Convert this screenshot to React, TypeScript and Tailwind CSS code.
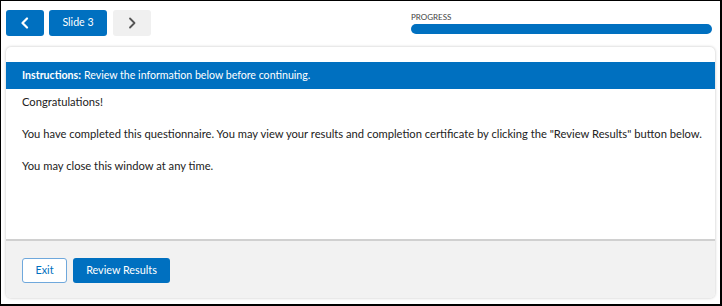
import React from "react";

export default function App() {
  return (
    <div
      className="w-[722px] h-[306px] bg-white border-l-[1px] border-t-[1px] border-r-[2px] border-b-[2px] border-black box-border flex flex-col"
      style={{ fontFamily: "Lato, 'Open Sans', sans-serif" }}
    >
      <div className="flex items-start pl-[5px] pr-[8px] pt-[9px] h-[46px]">
        <button className="w-[38px] h-[26px] bg-[#0070c0] rounded-[3px] flex items-center justify-center">
          <svg width="10" height="12" viewBox="0 0 10 12" fill="none">
            <path d="M7 1.5 L2.5 6 L7 10.5" stroke="white" strokeWidth="2.2" strokeLinecap="round" strokeLinejoin="round" />
          </svg>
        </button>
        <button className="ml-[5px] w-[58px] h-[26px] bg-[#0070c0] rounded-[3px] text-white text-[10.6px] flex items-center justify-center">
          Slide 3
        </button>
        <button className="ml-[6px] w-[38px] h-[26px] bg-[#f0f0f0] rounded-[3px] flex items-center justify-center">
          <svg width="10" height="12" viewBox="0 0 10 12" fill="none">
            <path d="M3 1.5 L7.5 6 L3 10.5" stroke="#555" strokeWidth="1.8" strokeLinecap="round" strokeLinejoin="round" />
          </svg>
        </button>
        <div className="ml-auto w-[301px] flex flex-col pt-[2px]">
          <div className="text-[8px] leading-[10px] text-[#444] tracking-[0px]">PROGRESS</div>
          <div className="mt-[2px] h-[10px] w-full rounded-full bg-[#0070c0]" />
        </div>
      </div>
      <div className="mx-[5px] flex-1 mb-[6px] rounded-[5px] bg-white shadow-[0_0_3px_rgba(0,0,0,0.25)] flex flex-col overflow-hidden">
        <div className="h-[15px]" />
        <div className="h-[27px] bg-[#0070c0] text-white text-[10.6px] flex items-center pl-[16px]">
          <span className="font-bold">Instructions:</span>
          <span className="ml-[3px]">Review the information below before continuing.</span>
        </div>
        <div className="flex-1 pl-[16px] pr-[4px] pt-[5px] text-[11.2px] text-[#222] leading-[16px]">
          <p>Congratulations!</p>
          <p className="mt-[16px]">
            You have completed this questionnaire. You may view your results and completion certificate by clicking the "Review Results" button below.
          </p>
          <p className="mt-[16px]">You may close this window at any time.</p>
        </div>
        <div className="h-[59px] border-t-[2px] border-[#d0d0d0] bg-[#f2f2f2] flex items-center pl-[16px] gap-[6px] pt-[2px]">
          <button className="w-[45px] h-[25px] bg-white border border-[#6fa8dc] rounded-[3px] text-[#0070c0] text-[10.8px]">
            Exit
          </button>
          <button className="w-[97px] h-[25px] bg-[#0070c0] rounded-[3px] text-white text-[10.8px]">
            Review Results
          </button>
        </div>
      </div>
    </div>
  );
}
